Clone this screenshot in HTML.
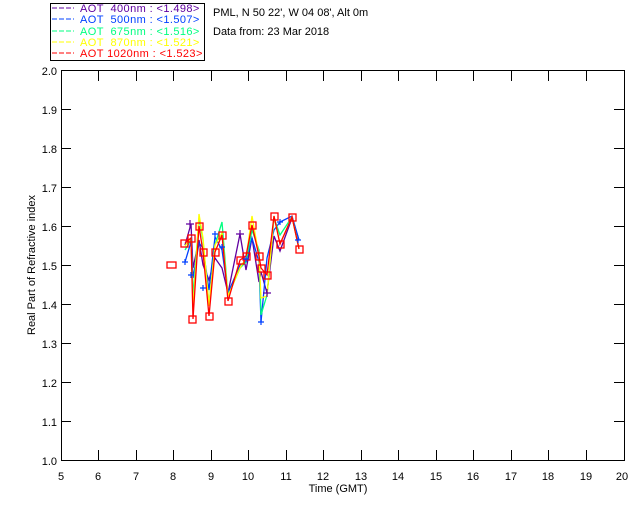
<!DOCTYPE html>
<html><head><style>
body{margin:0;background:#fff;width:640px;height:512px;overflow:hidden}
svg text{font-family:"Liberation Sans",sans-serif;font-size:11px}
.lg{letter-spacing:0.4px}
</style></head><body>
<svg width="640" height="512" xmlns="http://www.w3.org/2000/svg">
<rect x="50.5" y="3.5" width="154" height="57" fill="none" stroke="#000"/>
<g stroke-dasharray="5,2" stroke-width="1">
<line x1="52" y1="8" x2="74" y2="8" stroke="#6000a0"/>
<line x1="52" y1="19" x2="74" y2="19" stroke="#0040ff"/>
<line x1="52" y1="31" x2="74" y2="31" stroke="#00ff80"/>
<line x1="52" y1="42" x2="74" y2="42" stroke="#ffff00"/>
<line x1="52" y1="53" x2="74" y2="53" stroke="#ff0000"/>
</g>
<text class="lg" x="80" y="12" fill="#6000a0" xml:space="preserve">AOT  400nm : &lt;1.498&gt;</text>
<text class="lg" x="80" y="23" fill="#0040ff" xml:space="preserve">AOT  500nm : &lt;1.507&gt;</text>
<text class="lg" x="80" y="35" fill="#00ff80" xml:space="preserve">AOT  675nm : &lt;1.516&gt;</text>
<text class="lg" x="80" y="46" fill="#ffff00" xml:space="preserve">AOT  870nm : &lt;1.521&gt;</text>
<text class="lg" x="80" y="57" fill="#ff0000" xml:space="preserve">AOT 1020nm : &lt;1.523&gt;</text>
<text x="213" y="16" fill="#000">PML, N 50 22', W 04 08', Alt 0m</text>
<text x="213" y="35" fill="#000">Data from: 23 Mar 2018</text>
<rect x="61.5" y="70.5" width="563" height="390" fill="none" stroke="#000"/>
<g stroke="#000">
<path d="M61 109.5h10M61 148.5h10M61 187.5h10M61 226.5h10M61 265.5h10M61 304.5h10M61 343.5h10M61 382.5h10M61 421.5h10"/>
<path d="M624 109.5h-10M624 148.5h-10M624 187.5h-10M624 226.5h-10M624 265.5h-10M624 304.5h-10M624 343.5h-10M624 382.5h-10M624 421.5h-10"/>
<path d="M98.5 460v-10M136.5 460v-10M173.5 460v-10M211.5 460v-10M248.5 460v-10M286.5 460v-10M323.5 460v-10M361.5 460v-10M398.5 460v-10M436.5 460v-10M473.5 460v-10M511.5 460v-10M548.5 460v-10M586.5 460v-10"/>
<path d="M98.5 71v10M136.5 71v10M173.5 71v10M211.5 71v10M248.5 71v10M286.5 71v10M323.5 71v10M361.5 71v10M398.5 71v10M436.5 71v10M473.5 71v10M511.5 71v10M548.5 71v10M586.5 71v10"/>
</g>
<g fill="#000" text-anchor="end">
<text x="57" y="75">2.0</text><text x="57" y="114">1.9</text><text x="57" y="153">1.8</text><text x="57" y="192">1.7</text><text x="57" y="231">1.6</text><text x="57" y="270">1.5</text><text x="57" y="309">1.4</text><text x="57" y="348">1.3</text><text x="57" y="387">1.2</text><text x="57" y="426">1.1</text><text x="57" y="465">1.0</text>
</g>
<g fill="#000" text-anchor="middle">
<text x="61" y="480">5</text><text x="98" y="480">6</text><text x="136" y="480">7</text><text x="173" y="480">8</text><text x="211" y="480">9</text><text x="248" y="480">10</text><text x="286" y="480">11</text><text x="323" y="480">12</text><text x="361" y="480">13</text><text x="398" y="480">14</text><text x="436" y="480">15</text><text x="473" y="480">16</text><text x="511" y="480">17</text><text x="548" y="480">18</text><text x="586" y="480">19</text><text x="622" y="480">20</text>
<text x="338" y="492">Time (GMT)</text>
<text transform="translate(35,265) rotate(-90)">Real Part of Refractive index</text>
</g>
<g fill="none" stroke-width="1.3">
<polyline stroke="#6000a0" points="185,245 191,224 193,268 199,240 203,265 209,280 215,258 222,268 228,293 240,234 246,270 252,238 259,282 261,272 267,293 274,236 280,251 292,218 299,240"/>
<polyline stroke="#0040ff" points="185,262 191,242 193,278 199,243 203,248 209,290 215,237 222,250 228,293 240,265 246,262 252,238 259,262 261,322 267,258 274,230 280,222 292,216 299,240"/>
<polyline stroke="#00ff80" points="185,250 191,240 193,297 199,218 203,240 209,305 215,245 222,222 228,296 240,268 246,262 252,230 259,250 261,315 267,295 274,218 280,235 292,217 299,248"/>
<polyline stroke="#ffff00" points="185,246 191,238 193,310 199,214 203,238 209,306 215,245 222,233 228,296 240,268 246,258 252,216 259,256 261,298 267,296 274,216 280,244 292,217 299,249"/>
<polyline stroke="#ff0000" points="185,243 191,238 193,319 199,226 203,252 209,316 215,252 222,235 228,301 240,260 246,256 252,225 259,256 261,268 267,275 274,216 280,244 292,217 299,249"/>
</g>
<g fill="none" stroke="#ff0000" stroke-width="1.3">
<rect x="167" y="262" width="9" height="6"/>
<rect x="181" y="240" width="7" height="7"/><rect x="188" y="235" width="7" height="7"/><rect x="189" y="316" width="7" height="7"/><rect x="196" y="223" width="7" height="7"/><rect x="200" y="249" width="7" height="7"/><rect x="206" y="313" width="7" height="7"/><rect x="212" y="249" width="7" height="7"/><rect x="219" y="232" width="7" height="7"/><rect x="225" y="298" width="7" height="7"/><rect x="237" y="257" width="7" height="7"/><rect x="243" y="253" width="7" height="7"/><rect x="249" y="222" width="7" height="7"/><rect x="256" y="253" width="7" height="7"/><rect x="258" y="265" width="7" height="7"/><rect x="264" y="272" width="7" height="7"/><rect x="271" y="213" width="7" height="7"/><rect x="277" y="241" width="7" height="7"/><rect x="289" y="214" width="7" height="7"/><rect x="296" y="246" width="7" height="7"/>
</g>
<g fill="none" stroke="#0040ff" stroke-width="1.2">
<path d="M182 262h6M185 259v6M188 275h6M191 272v6M200 288h6M203 285v6M212 234h6M215 231v6M219 247h6M222 244v6M243 259h6M246 256v6M258 322h6M261 319v6M277 222h6M280 219v6M295 240h6M298 237v6"/>
</g>
<g fill="none" stroke="#6000a0" stroke-width="1.2">
<path d="M186 224h8M190 220v8M236 234h8M240 230v8M263 293h8M267 289v8"/>
</g>
</svg>
</body></html>
